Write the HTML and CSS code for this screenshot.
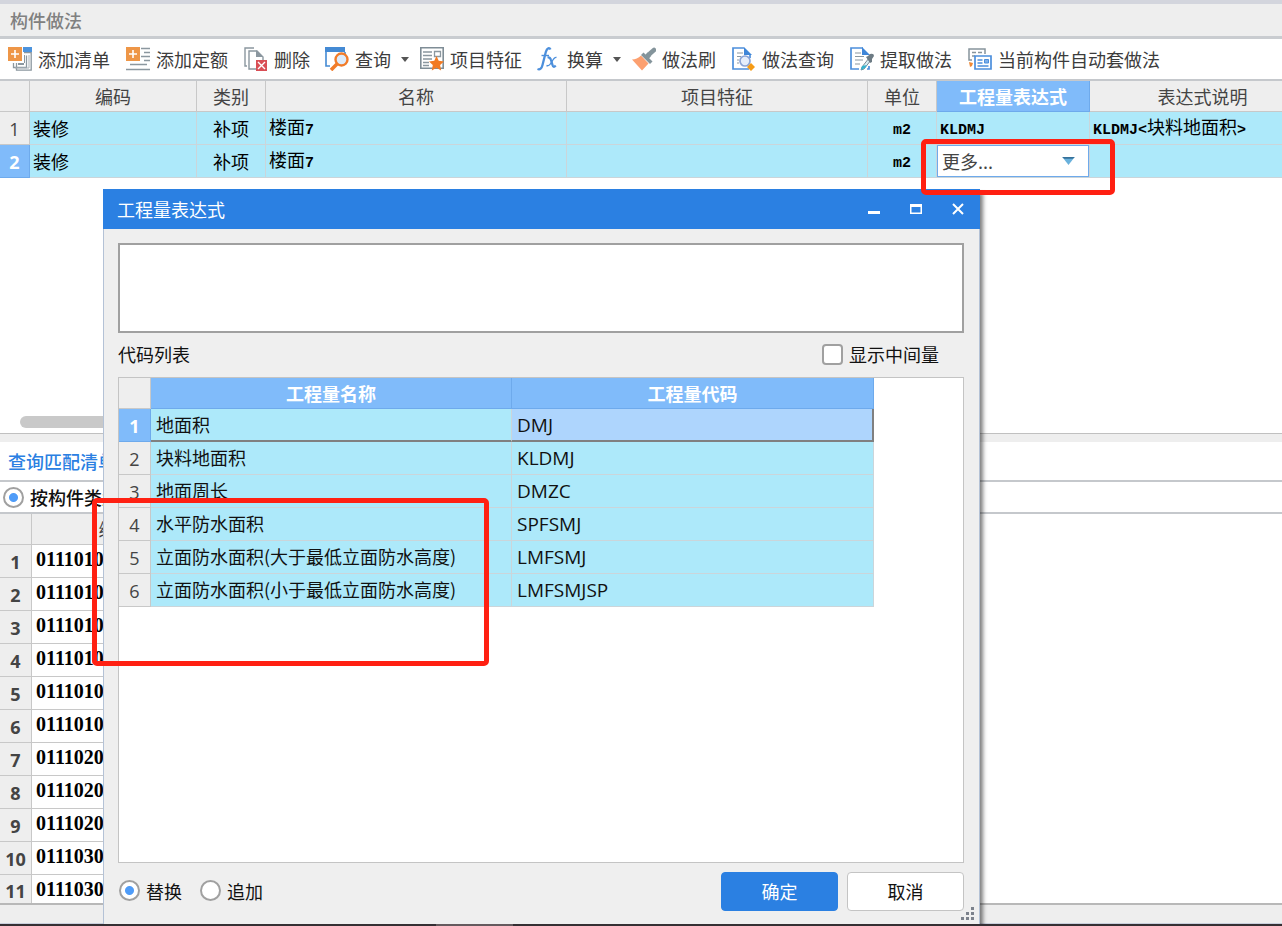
FILE: index.html
```html
<!DOCTYPE html>
<html lang="zh-CN">
<head>
<meta charset="utf-8">
<title>构件做法</title>
<link rel="stylesheet" href="styles.css">
</head>
<body>
<div class="app">
  <header class="pane-title">构件做法</header>
  <div class="toolbar" role="toolbar">
    <button class="tool" type="button">
      <svg class="icon" viewBox="0 0 24 24"><path d="M16 5.500h7.200v17.700H8.500V16M18.500 8.500v12H5.500V16" fill="none" stroke="#8b979f" stroke-width="1.300"/><path d="M21 8v13H7" fill="none" stroke="#a9b2b8"/><path d="M15 0h9v5h-9z" fill="#4c93dd"/><path d="M10 16h6v2h-6zM16 8h1v8h-1z" fill="#8b979f"/><path d="M0 0h14v14H0z" fill="#ee9647"/><path d="M7 3v8M3 7h8" stroke="#fff" stroke-width="1.600"/></svg>
      添加清单</button>
    <button class="tool" type="button">
      <svg class="icon" viewBox="0 0 24 24"><path d="M15 1.500h9M18 5.500h6M15 9.500h9M18 13.500h6M4 17.500h17M0 22.500h24" stroke="#8b979f" stroke-width="1.600"/><path d="M0 0h14v14H0z" fill="#ee9647"/><path d="M7 3v8M3 7h8" stroke="#fff" stroke-width="1.600"/></svg>
      添加定额</button>
    <button class="tool" type="button">
      <svg class="icon" viewBox="0 0 24 24"><path d="M10 1H1v18h2" fill="none" stroke="#8b979f" stroke-width="1.400"/><path d="M12 22H5V4h8l6 6v3" fill="#fff" stroke="#8b979f" stroke-width="1.400"/><path d="M12 3l7 7h-7z" fill="#8b979f"/><path d="M12 13h11v11H12z" fill="#d94e55"/><path d="M14 15l7 7M21 15l-7 7" stroke="#fff" stroke-width="1.400"/></svg>
      删除</button>
    <button class="tool tool-menu" type="button">
      <svg class="icon" viewBox="0 0 24 24"><path d="M1 4v15h4M20 5v2" fill="none" stroke="#448ad4" stroke-width="1.600"/><path d="M0 0h20v5H0z" fill="#448ad4"/><path d="M12 17l-6 6" stroke="#f17c2a" stroke-width="3.600"/><circle cx="16.500" cy="12.500" r="6" fill="#dcebfb" stroke="#f17c2a" stroke-width="2.400"/></svg>
      查询<svg class="caret" viewBox="0 0 8 5"><path d="M0 0h8L4 5z" fill="#555"/></svg></button>
    <button class="tool" type="button">
      <svg class="icon" viewBox="0 0 24 24"><path d="M.8.800h22.400v20.400H.8z" fill="#fff" stroke="#7f8d96" stroke-width="1.600"/><path d="M3 5h9M3 8.500h9M3 12h9M3 15.500h6M3 18.500h6" stroke="#8b979f" stroke-width="1.300"/><path d="M14.500 4.500h6v5h-6z" fill="none" stroke="#8b979f" stroke-width="1.300"/><path d="M16.500 9l2.200 4.800 5.300.700-3.900 3.500 1 5.500-4.600-2.700-4.700 2.700 1-5.500L9 14.500l5.300-.700z" fill="#f27a22"/></svg>
      项目特征</button>
    <button class="tool tool-menu" type="button">
      <svg class="icon" viewBox="0 0 24 24"><path d="M13.500 2.500C12.500.500 10 .500 8.800 5L5.500 18c-.8 3.500-2.500 5-5 4" fill="none" stroke="#4c8fdc" stroke-width="2.300"/><path d="M4.500 8.500h7.500" stroke="#4c8fdc" stroke-width="1.400"/><path d="M10.500 10.500c2-.5 3 .5 3.500 2.500l1.500 5c.5 2 1.500 2.500 3.200.500" fill="none" stroke="#4c8fdc" stroke-width="2.300"/><path d="M19.500 10.500c-1.500-.5-2.500.5-4.500 4s-3.500 5-5.500 4" fill="none" stroke="#4c8fdc" stroke-width="1.400"/></svg>
      换算<svg class="caret" viewBox="0 0 8 5"><path d="M0 0h8L4 5z" fill="#555"/></svg></button>
    <button class="tool" type="button">
      <svg class="icon" viewBox="0 0 24 24"><path d="M0 12.500q5 0 9-4l7.500 8L10 23.500z" fill="#fca070"/><path d="M9 8l2.500-2.500 9 9L18 17z" fill="#84949b"/><path d="M14 11l3.500-4" stroke="#84949b" stroke-width="5"/><path d="M18 6.500l4-3.500" stroke="#84949b" stroke-width="4.500" stroke-linecap="round"/></svg>
      做法刷</button>
    <button class="tool" type="button">
      <svg class="icon" viewBox="0 0 24 24"><path d="M12 1H1v21h16M18 8v3" fill="none" stroke="#4c8fdc" stroke-width="1.700"/><path d="M12 0l8 8h-8z" fill="#3f86d8"/><path d="M5 6h6M5 9.500h4M5 13h2M5 16h2" stroke="#8b979f" stroke-width="1.200"/><circle cx="13" cy="14" r="5" fill="#e5edfa" stroke="#8ba4d6" stroke-width="1.700"/><path d="M19 16l4 4-4 4-4-4z" fill="#f59b16"/></svg>
      做法查询</button>
    <button class="tool" type="button">
      <svg class="icon" viewBox="0 0 24 24"><path d="M13 1H1v21h8M17 22h2v-3" fill="none" stroke="#4c8fdc" stroke-width="1.700"/><path d="M12 0l8 8h-8z" fill="#3f86d8"/><path d="M5 6h6M5 9.500h9M5 13h8M5 17h5" stroke="#8b979f" stroke-width="1.200"/><path d="M19 11l-7 9-1 3 3-1 7-9" fill="#d8edf3" stroke="#7c8b94"/><path d="M12 19l-1 4 4-2 2-3z" fill="#35b4cf"/><path d="M16 10l2-1 2-2q4-1 4 2l-2 3v3l-2 1z" fill="#6d7b84"/></svg>
      提取做法</button>
    <button class="tool" type="button">
      <svg class="icon" viewBox="0 0 24 24"><path d="M4 13H1V2h16v5" fill="none" stroke="#87949c" stroke-width="1.500"/><path d="M4 5.500h4M10 5.500h4M4 9h3" stroke="#87949c" stroke-width="1.500"/><path d="M7 9h16v13H7z" fill="#fff" stroke="#4c8fdc" stroke-width="1.700"/><path d="M9.500 13h5M9.500 16h5M9.500 19h11" stroke="#4c8fdc" stroke-width="1.300"/><path d="M16.500 12.500h4v3.500h-4z" fill="#7db0ea" stroke="#4c8fdc"/><path d="M1 15l4 1-1 3-2 1z" fill="#ef8a36"/></svg>
      当前构件自动套做法</button>
  </div>

  <main class="upper">
    <table class="grid works">
      <colgroup><col class="w-no"><col class="w-code"><col class="w-kind"><col class="w-name"><col class="w-name"><col class="w-kind"><col class="w-expr"><col class="w-note"></colgroup>
      <thead><tr><th></th><th>编码</th><th>类别</th><th>名称</th><th>项目特征</th><th>单位</th><th class="active">工程量表达式</th><th>表达式说明</th></tr></thead>
      <tbody>
        <tr><th>1</th><td>装修</td><td class="mid">补项</td><td>楼面<span class="latin">7</span></td><td></td><td class="mid"><span class="latin">m2</span></td><td><span class="latin">KLDMJ</span></td><td><span class="latin">KLDMJ&lt;</span>块料地面积<span class="latin">&gt;</span></td></tr>
        <tr><th class="active">2</th><td>装修</td><td class="mid">补项</td><td>楼面<span class="latin">7</span></td><td></td><td class="mid"><span class="latin">m2</span></td>
          <td class="editing"><div class="combo"><select aria-label="工程量表达式"><option>更多...</option></select><svg class="combo-arrow" viewBox="0 0 14 9"><path d="M0 0h14L7 9z" fill="#69b1dc"/><path d="M0 0h14l-2 2H2z" fill="#36719a"/></svg></div></td><td></td></tr>
      </tbody>
    </table>
    <div class="scroll-thumb"></div>
  </main>

  <section class="lower">
    <nav class="tabs"><a href="#match">查询匹配清单</a></nav>
    <div class="filter"><label><input type="radio" name="filter" checked>按构件类型</label></div>
    <div class="match" id="match">
      <table class="grid codes">
        <colgroup><col class="w-no2"><col class="w-code2"></colgroup>
        <thead><tr><th></th><th>编码</th></tr></thead>
        <tbody>
          <tr><th>1</th><td>011101001</td></tr>
          <tr><th>2</th><td>011101002</td></tr>
          <tr><th>3</th><td>011101003</td></tr>
          <tr><th>4</th><td>011101004</td></tr>
          <tr><th>5</th><td>011101005</td></tr>
          <tr><th>6</th><td>011101006</td></tr>
          <tr><th>7</th><td>011102001</td></tr>
          <tr><th>8</th><td>011102002</td></tr>
          <tr><th>9</th><td>011102003</td></tr>
          <tr><th>10</th><td>011103001</td></tr>
          <tr><th>11</th><td>011103002</td></tr>
        </tbody>
      </table>
    </div>
    <div class="status"></div>
  </section>
  <div class="taskbar"></div>
</div>

<div class="dialog" role="dialog" aria-labelledby="dialog-title">
  <div class="titlebar">
    <span id="dialog-title">工程量表达式</span>
    <div class="window-buttons">
      <button type="button" aria-label="最小化"><svg viewBox="0 0 12 12"><path d="M0 8h12v3H0z" fill="#fff"/></svg></button>
      <button type="button" aria-label="最大化"><svg viewBox="0 0 12 12"><path d="M0 1h12v10H0zM1.500 4v5.500h9V4z" fill="#fff" fill-rule="evenodd"/></svg></button>
      <button type="button" aria-label="关闭"><svg viewBox="0 0 12 12"><path d="M1 1l10 10M11 1L1 11" stroke="#fff" stroke-width="2"/></svg></button>
    </div>
  </div>
  <div class="dialog-body">
    <textarea class="expression" aria-label="表达式"></textarea>
    <div class="list-head">
      <span>代码列表</span>
      <label><input type="checkbox">显示中间量</label>
    </div>
    <div class="list">
      <table class="grid quantities">
        <colgroup><col class="w-no3"><col class="w-qty"><col class="w-qty2"></colgroup>
        <thead><tr><th></th><th class="active">工程量名称</th><th class="active">工程量代码</th></tr></thead>
        <tbody>
          <tr class="current"><th class="active">1</th><td>地面积</td><td>DMJ</td></tr>
          <tr><th>2</th><td>块料地面积</td><td>KLDMJ</td></tr>
          <tr><th>3</th><td>地面周长</td><td>DMZC</td></tr>
          <tr><th>4</th><td>水平防水面积</td><td>SPFSMJ</td></tr>
          <tr><th>5</th><td>立面防水面积(大于最低立面防水高度)</td><td>LMFSMJ</td></tr>
          <tr><th>6</th><td>立面防水面积(小于最低立面防水高度)</td><td>LMFSMJSP</td></tr>
        </tbody>
      </table>
    </div>
    <div class="actions">
      <label><input type="radio" name="mode" checked>替换</label>
      <label><input type="radio" name="mode">追加</label>
      <button class="btn primary" type="button">确定</button>
      <button class="btn" type="button">取消</button>
    </div>
  </div>
  <svg class="grip" viewBox="0 0 13 13"><path d="M10 0h3v3h-3zM5 5h3v3H5zM10 5h3v3h-3zM0 10h3v3H0zM5 10h3v3H5zM10 10h3v3h-3z" fill="#7c828c"/></svg>
</div>

<div class="mark mark-combo"></div>
<div class="mark mark-rows"></div>
</body>
</html>
```
FILE: styles.css
```css
* { box-sizing: border-box; }

body {
  margin: 0;
  height: 100vh;
  overflow: hidden;
  position: relative;
  background: #fff;
  color: #111;
  font: 18px/24px "Noto Sans CJK SC", sans-serif;
}

button, select, textarea, input { font: inherit; color: inherit; margin: 0; }

.app {
  height: 100%;
  display: flex;
  flex-direction: column;
  border-top: 4px solid #d3d5dd;
}

.pane-title {
  flex: none;
  padding: 4px 10px;
  border-bottom: 3px solid #c9ccd0;
  background: #eee;
  color: #808080;
  font-weight: 500;
}

.toolbar {
  flex: none;
  display: flex;
  gap: 16px;
  padding: 8px;
  border-bottom: 2px solid #c5c8cc;
  background: #fff;
}

.tool {
  display: flex;
  align-items: center;
  gap: 6px;
  padding: 0;
  border: 0;
  background: none;
  color: #3c3c3c;
  white-space: nowrap;
}

.tool-menu { margin-left: -1px; margin-right: -5px; }
.icon { width: 24px; height: 24px; }
.caret { width: 8px; height: 5px; margin-left: 4px; }

/* Data grids */
.grid {
  table-layout: fixed;
  border-collapse: separate;
  border-spacing: 0;
}

.grid th, .grid td {
  height: 33px;
  padding: 0 3px;
  border-right: 1px solid #c8c8c8;
  border-bottom: 1px solid #c8c8c8;
  white-space: nowrap;
  overflow: hidden;
}

.grid th {
  padding: 0;
  background: #eee;
  color: #444;
  font-weight: 400;
  text-align: center;
}

.grid thead th { height: 31px; }
.grid tbody th { padding-top: 2px; font-family: "Open Sans", sans-serif; }
.grid td { background: #ade9fa; border-color: #cbd5da; text-align: left; }
.grid td.mid { text-align: center; }

.grid th.active {
  background: #80bbfa;
  border-color: #6eaaec;
  color: #fff;
  font-weight: 700;
}

.upper {
  flex: 1;
  min-height: 0;
  display: flex;
  flex-direction: column;
  justify-content: space-between;
  overflow: hidden;
  border-bottom: 1px solid #c0c0c0;
}

.works { width: 1316px; flex: none; }
.works td { color: #000; }
.latin { font-family: "Liberation Mono", monospace; font-size: 15px; font-weight: 700; }
.w-no { width: 30px; }
.w-code { width: 167px; }
.w-kind { width: 69px; }
.w-name { width: 301px; }
.w-expr { width: 153px; }
.w-note { width: 226px; }

.works td.editing { padding: 0; }
.combo { position: relative; }
.combo select {
  display: block;
  width: 100%;
  height: 32px;
  padding: 0 4px;
  border: 1px solid #6eaaec;
  border-radius: 0;
  background: #fff;
  color: #444;
  appearance: none;
}
.combo-arrow { position: absolute; right: 14px; top: 12px; width: 13px; height: 8px; }

.scroll-thumb {
  width: 60%;
  height: 12px;
  margin: 0 20px 5px;
  border-radius: 6px;
  background: #c9c9c9;
}

/* Matching list */
.lower {
  flex: none;
  border-top: 8px solid #eee;
  background: #fff;
}

.tabs { padding: 7px 8px; border-bottom: 2px solid #c5c8cc; }
.tabs a { color: #2b80e2; text-decoration: none; font-weight: 500; }
.filter { padding: 3px; border-bottom: 2px solid #c5c8cc; }

label { display: flex; align-items: center; gap: 6px; white-space: nowrap; }
.filter label { font-weight: 500; }

input[type="radio"], input[type="checkbox"] {
  appearance: none;
  width: 21px;
  height: 21px;
  border: 2px solid #a0a0a0;
  border-radius: 50%;
  background: #fff;
}
input[type="checkbox"] { border-radius: 4px; }
input[type="radio"]:checked { background: radial-gradient(circle, #4f9cf8 4px, #fff 5px); }

.codes { width: 202px; }
.w-no2 { width: 32px; }
.w-code2 { width: 170px; }
.codes td {
  background: #fff;
  border-color: #c8c8c8;
  padding: 0 4px 4px;
  color: #000;
  font: 700 20px/24px "Liberation Serif", serif;
}
.codes tbody th { font-weight: 700; padding-top: 2px; }
.codes tbody tr:last-child > * { height: 28px; border-bottom: 0; padding-bottom: 0; line-height: 24px; }
.codes tbody tr:last-child th { padding-top: 4px; }
.status { height: 21px; border-top: 2px solid #b8b8b8; border-bottom: 1px solid #c9cfdc; background: #eee; }

.taskbar {
  flex: none;
  height: 2px;
  background: linear-gradient(90deg, #352f33 34%, #655a5e 34%, #655a5e 40%, #352f33 40%);
}

/* Floating window */
.dialog {
  position: absolute;
  left: 103px;
  top: 189px;
  bottom: 2px;
  width: 877px;
  display: flex;
  flex-direction: column;
  background: #efefef;
  box-shadow: 3px 4px 4px rgba(0, 0, 0, .5);
  clip-path: inset(0 -8px 0 0);
}

.titlebar {
  flex: none;
  height: 40px;
  display: flex;
  align-items: center;
  justify-content: space-between;
  padding: 0 16px 1px 14px;
  background: #2b80e2;
  color: #fff;
}
.window-buttons { display: flex; gap: 30px; }
.window-buttons button { padding: 0; border: 0; background: none; display: flex; }
.window-buttons svg { width: 12px; height: 12px; }

.dialog-body {
  flex: 1;
  min-height: 0;
  display: flex;
  flex-direction: column;
  padding: 14px 15px 0 14px;
  border: solid #b4c2d6;
  border-width: 0 1px;
}

.expression {
  flex: none;
  height: 90px;
  border: 2px solid #a0a0a0;
  border-radius: 0;
  background: #fff;
  resize: none;
}

.list-head {
  flex: none;
  height: 44px;
  display: flex;
  align-items: center;
  justify-content: space-between;
  padding: 0 25px 2px 0;
}

.list {
  flex: 1;
  min-height: 0;
  border: 1px solid #c4c4c4;
  background: #fff;
}

.quantities { width: 755px; }
.w-no3 { width: 32px; }
.w-qty { width: 361px; }
.w-qty2 { width: 362px; }
.quantities td { padding: 0 5px 2px; }
.quantities td:last-child { padding-bottom: 0; font-family: "Open Sans", sans-serif; font-size: 19px; }
.quantities .current td { border-bottom: 2px solid #808080; }
.quantities .current td:last-child { background: #aed5fd; border-right: 2px solid #808080; }

.actions {
  flex: none;
  display: flex;
  align-items: center;
  gap: 18px;
  height: 61px;
  padding: 0 0 4px 1px;
}
.actions label { padding-bottom: 2px; }

.btn {
  width: 117px;
  height: 39px;
  padding: 0 0 2px;
  border: 1px solid #c4c4c4;
  border-radius: 4px;
  background: #fff;
}
.btn.primary {
  margin-left: auto;
  margin-right: -9px;
  border-color: #2b80e2;
  background: #2b80e2;
  color: #fff;
}

.grip { position: absolute; right: 6px; bottom: 4px; width: 13px; height: 13px; }

/* Highlight frames drawn over the windows */
.mark {
  position: absolute;
  border: 5px solid #ff2012;
  border-radius: 5px;
  pointer-events: none;
}
.mark-combo { left: 921px; top: 139px; width: 194px; height: 56px; }
.mark-rows { left: 92px; top: 498px; width: 397px; height: 168px; }
```
